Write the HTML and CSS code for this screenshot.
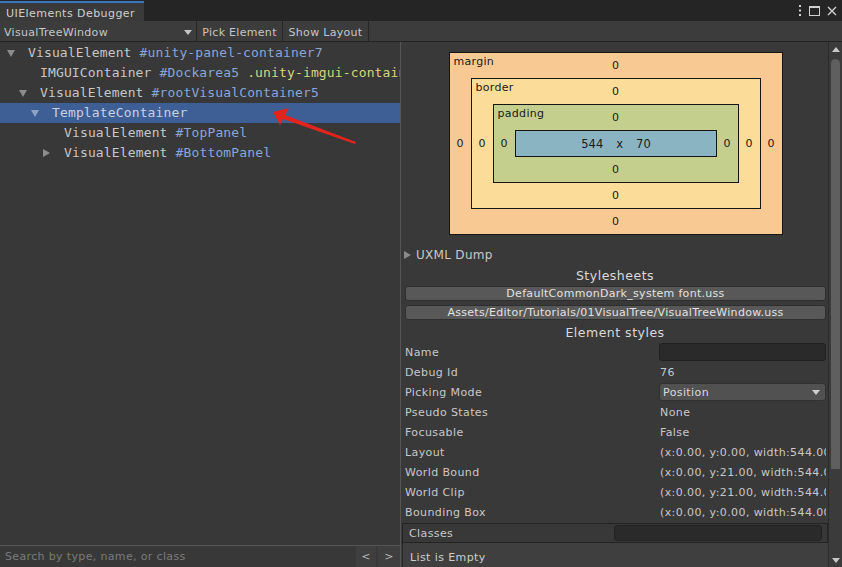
FILE: index.html
```html
<!DOCTYPE html>
<html>
<head>
<meta charset="utf-8">
<link rel="stylesheet" href="styles.css">
</head>
<body>
<div class="window">
  <div class="tabbar">
    <div class="tab">UIElements Debugger</div>
    <div class="tabicons">
      <svg class="ico" width="4" height="11" viewBox="0 0 4 11"><rect x="1" y="0" width="2" height="2" fill="#d0d0d0"/><rect x="1" y="4.5" width="2" height="2" fill="#d0d0d0"/><rect x="1" y="9" width="2" height="2" fill="#d0d0d0"/></svg>
      <svg class="ico" width="11" height="10" viewBox="0 0 11 10"><rect x="0.5" y="0.5" width="10" height="9" fill="none" stroke="#d0d0d0" stroke-width="1"/><rect x="0" y="0" width="11" height="2" fill="#d0d0d0"/></svg>
      <svg class="ico" width="10" height="10" viewBox="0 0 10 10"><path d="M1 1 L9 9 M9 1 L1 9" stroke="#d0d0d0" stroke-width="1.4"/></svg>
    </div>
  </div>
  <div class="toolbar">
    <div class="tb-dropdown"><span>VisualTreeWindow</span><svg width="8" height="5" viewBox="0 0 8 5"><path d="M0 0 H8 L4 5 Z" fill="#c4c4c4"/></svg></div>
    <div class="tb-btn">Pick Element</div>
    <div class="tb-btn">Show Layout</div>
  </div>
  <div class="main">
    <div class="left">
      <div class="tree">
        <div class="row d0"><span class="tog"><svg width="8" height="7" viewBox="0 0 8 7"><path d="M0 0 H8 L4 7 Z"/></svg></span><span>VisualElement</span>&nbsp;<span class="id">#unity-panel-container7</span></div>
        <div class="row d1"><span class="tog"></span><span>IMGUIContainer</span>&nbsp;<span class="id">#Dockarea5</span>&nbsp;<span class="cls">.unity-imgui-container</span></div>
        <div class="row d1"><span class="tog"><svg width="8" height="7" viewBox="0 0 8 7"><path d="M0 0 H8 L4 7 Z"/></svg></span><span>VisualElement</span>&nbsp;<span class="id">#rootVisualContainer5</span></div>
        <div class="row d2 sel"><span class="tog"><svg width="8" height="7" viewBox="0 0 8 7"><path d="M0 0 H8 L4 7 Z"/></svg></span><span>TemplateContainer</span></div>
        <div class="row d3"><span class="tog"></span><span>VisualElement</span>&nbsp;<span class="id">#TopPanel</span></div>
        <div class="row d3"><span class="tog"><svg width="7" height="8" viewBox="0 0 7 8"><path d="M0 0 L7 4 L0 8 Z"/></svg></span><span>VisualElement</span>&nbsp;<span class="id">#BottomPanel</span></div>
      </div>
      <div class="search">
        <span class="search-text">Search by type, name, or class</span>
        <div class="nav-btn">&lt;</div>
        <div class="nav-btn wide">&gt;</div>
      </div>
      <svg class="annot" width="400" height="120" viewBox="0 0 400 120"><polygon points="273,70 289,66 285,73 356,100 355,102 283,77 280,83" fill="#e3241c"/></svg>
    </div>
    <div class="right">
      <div class="inspector">
        <div class="bm-wrap">
          <div class="bm margin">
            <div class="bm-top"><span class="bm-label">margin</span><span>0</span><span></span></div>
            <div class="bm-side">0</div>
            <div class="bm border">
              <div class="bm-top"><span class="bm-label">border</span><span>0</span><span></span></div>
              <div class="bm-side">0</div>
              <div class="bm padding">
                <div class="bm-top"><span class="bm-label">padding</span><span>0</span><span></span></div>
                <div class="bm-side">0</div>
                <div class="bm-content"><span>544</span><span>x</span><span>70</span></div>
                <div class="bm-side">0</div>
                <div class="bm-bottom">0</div>
              </div>
              <div class="bm-side">0</div>
              <div class="bm-bottom">0</div>
            </div>
            <div class="bm-side">0</div>
            <div class="bm-bottom">0</div>
          </div>
        </div>
        <div class="foldout"><svg width="7" height="8" viewBox="0 0 7 8"><path d="M0 0 L7 4 L0 8 Z" fill="#8a8a8a"/></svg><span>UXML Dump</span></div>
        <div class="section-title">Stylesheets</div>
        <div class="pad">
          <div class="sheet-btn first">DefaultCommonDark_system font.uss</div>
          <div class="sheet-btn">Assets/Editor/Tutorials/01VisualTree/VisualTreeWindow.uss</div>
        </div>
        <div class="section-title second">Element styles</div>
        <div class="props">
          <div class="prop"><span class="lbl">Name</span><div class="field"></div></div>
          <div class="prop"><span class="lbl">Debug Id</span><span class="val">76</span></div>
          <div class="prop"><span class="lbl">Picking Mode</span><div class="dropdown"><span>Position</span><svg width="8" height="5" viewBox="0 0 8 5"><path d="M0 0 H8 L4 5 Z" fill="#cfcfcf"/></svg></div></div>
          <div class="prop"><span class="lbl">Pseudo States</span><span class="val">None</span></div>
          <div class="prop"><span class="lbl">Focusable</span><span class="val">False</span></div>
          <div class="prop"><span class="lbl">Layout</span><span class="val">(x:0.00, y:0.00, width:544.00, height:70.00)</span></div>
          <div class="prop"><span class="lbl">World Bound</span><span class="val">(x:0.00, y:21.00, width:544.00, height:70.00)</span></div>
          <div class="prop"><span class="lbl">World Clip</span><span class="val">(x:0.00, y:21.00, width:544.00, height:70.00)</span></div>
          <div class="prop"><span class="lbl">Bounding Box</span><span class="val">(x:0.00, y:0.00, width:544.00, height:70.00)</span></div>
        </div>
        <div class="classes">
          <div class="classes-head"><span>Classes</span><div class="classes-field"></div></div>
          <div class="classes-list">List is Empty</div>
        </div>
      </div>
      <div class="vscroll">
        <div class="sc-arrow"><svg width="8" height="5" viewBox="0 0 8 5"><path d="M0 5 H8 L4 0 Z" fill="#c8c8c8"/></svg></div>
        <div class="thumb"></div>
        <div class="sc-space"></div>
        <div class="sc-arrow bottom"><svg width="8" height="5" viewBox="0 0 8 5"><path d="M0 0 H8 L4 5 Z" fill="#c8c8c8"/></svg></div>
      </div>
    </div>
  </div>
</div>
</body>
</html>
```
FILE: styles.css
```css
html, body {
  margin: 0;
  padding: 0;
  background: #383838;
}
body {
  font-family: "DejaVu Sans", sans-serif;
  font-size: 11px;
  color: #c8c8c8;
}
.window {
  width: 842px;
  height: 567px;
  display: flex;
  flex-direction: column;
  overflow: hidden;
}
.tabbar {
  height: 21px;
  flex: none;
  background: #252525;
  display: flex;
  justify-content: space-between;
  align-items: flex-start;
}
.tab {
  margin-top: 1px;
  width: 144px;
  height: 20px;
  box-sizing: border-box;
  border-top: 2px solid #3a76bf;
  background: #3a3a3a;
  color: #cfcfcf;
  padding: 2px 0 0 6px;
  line-height: 17px;
  letter-spacing: 0.45px;
}
.tabicons {
  display: flex;
  align-items: center;
  gap: 7px;
  padding: 5px 5px 0 0;
}
.ico { display: block; }
.toolbar {
  height: 20px;
  flex: none;
  background: #3c3c3c;
  border-bottom: 1px solid #232323;
  display: flex;
  align-items: stretch;
  line-height: 23px;
  letter-spacing: 0.3px;
}
.tb-dropdown {
  width: 197px;
  box-sizing: border-box;
  padding: 3px 4px 0 4px;
  border-right: 1px solid #262626;
  display: flex;
  justify-content: space-between;
  align-items: center;
  color: #c6c6c6;
  line-height: 17px;
}
.tb-btn {
  width: 86px;
  box-sizing: border-box;
  text-align: center;
  border-right: 1px solid #262626;
  color: #c6c6c6;
}
.main {
  flex: 1;
  display: flex;
  min-height: 0;
}
.left {
  width: 400px;
  flex: none;
  display: flex;
  flex-direction: column;
  position: relative;
  border-right: 1px solid #555555;
  background: #383838;
}
.tree {
  flex: 1;
  overflow: hidden;
  font-family: "DejaVu Sans Mono", monospace;
  font-size: 13px;
  letter-spacing: 0.14px;
  color: #c6c6c6;
  padding-top: 1px;
}
.row {
  height: 20px;
  line-height: 20px;
  display: flex;
  align-items: center;
  white-space: nowrap;
  box-sizing: border-box;
}
.row.d0 { padding-left: 4px; }
.row.d1 { padding-left: 16px; }
.row.d2 { padding-left: 28px; }
.row.d3 { padding-left: 40px; }
.tog {
  width: 24px;
  flex: none;
  display: flex;
  align-items: center;
  padding-left: 3px;
  box-sizing: border-box;
}
.tog svg { fill: #8c8c8c; display: block; }
.row.sel {
  background: #3e5f96;
  color: #c8d0e2;
}
.row.sel .tog svg { fill: #8ea3c9; }
.id { color: #88a6d8; }
.cls { color: #d5d57d; }
.search {
  height: 21px;
  flex: none;
  border-top: 1px solid #555555;
  display: flex;
  align-items: stretch;
  letter-spacing: 0.35px;
}
.search-text {
  flex: 1;
  color: #7b7b7b;
  padding-left: 5px;
  line-height: 21px;
}
.nav-btn {
  width: 20px;
  background: #3f3f3f;
  color: #b4b4b4;
  text-align: center;
  line-height: 22px;
  margin-right: 2px;
}
.nav-btn.wide { width: 22px; margin-right: 0; }
.annot {
  position: absolute;
  left: 0;
  top: 0;
  pointer-events: none;
}
.right {
  flex: 1;
  display: flex;
  min-width: 0;
  background: #393939;
}
.inspector {
  flex: 1;
  min-width: 0;
  overflow: hidden;
  display: flex;
  flex-direction: column;
}
.inspector > * { flex: none; }
.bm-wrap {
  padding: 10px 0 0 2px;
  display: flex;
  justify-content: center;
}
.bm {
  display: grid;
  grid-template-columns: 21px auto 21px;
  grid-template-rows: 25px auto 25px;
  border: 1px solid #151515;
  color: #1a1a1a;
  font-size: 11px;
}
.margin { background: #f8c993; }
.border { background: #fcdc99; }
.padding { background: #c5cf8d; }
.bm-top {
  grid-column: 1 / 4;
  display: grid;
  grid-template-columns: 1fr auto 1fr;
  align-items: center;
}
.bm-label {
  justify-self: start;
  align-self: start;
  padding: 2px 0 0 4px;
  letter-spacing: 0.3px;
}
.bm-side {
  display: flex;
  align-items: center;
  justify-content: center;
}
.bm-bottom {
  grid-column: 1 / 4;
  display: flex;
  align-items: center;
  justify-content: center;
}
.bm-content {
  width: 199px;
  height: 25px;
  background: #8bb4c3;
  border: 1px solid #151515;
  display: flex;
  align-items: center;
  justify-content: center;
  gap: 13px;
  padding-left: 1px;
  font-size: 11.5px;
}
.foldout {
  margin-top: 10px;
  height: 20px;
  display: flex;
  align-items: center;
  padding-left: 3px;
  gap: 5px;
  font-size: 12px;
  color: #c8c8c8;
  letter-spacing: 0.3px;
}
.foldout svg { display: block; }
.section-title {
  height: 20px;
  line-height: 22px;
  text-align: center;
  font-size: 12.5px;
  color: #dadada;
  letter-spacing: 0.5px;
  padding-left: 1px;
}
.section-title.second { margin-top: 2px; }
.pad { padding: 0 2px 0 4px; }
.sheet-btn {
  height: 15px;
  box-sizing: border-box;
  margin-top: 4px;
  background: #585858;
  border: 1px solid #2f2f2f;
  border-radius: 3px;
  text-align: center;
  line-height: 13px;
  color: #e2e2e2;
  letter-spacing: 0.3px;
  white-space: nowrap;
  overflow: hidden;
}
.sheet-btn.first { margin-top: 1px; }
.props {
  padding: 0 2px 0 4px;
  letter-spacing: 0.4px;
}
.prop {
  height: 20px;
  display: grid;
  grid-template-columns: 254px 1fr;
  align-items: center;
  white-space: nowrap;
}
.lbl { color: #c8c8c8; }
.val { color: #c8c8c8; padding-left: 1px; overflow: hidden; }
.field {
  height: 18px;
  box-sizing: border-box;
  background: #2a2a2a;
  border: 1px solid #212121;
  border-radius: 3px;
}
.dropdown {
  height: 18px;
  box-sizing: border-box;
  background: #515151;
  border: 1px solid #303030;
  border-radius: 3px;
  display: flex;
  align-items: center;
  justify-content: space-between;
  padding: 0 5px 0 3px;
  color: #dcdcdc;
}
.dropdown svg { display: block; }
.classes {
  margin: 1px 0 0 1px;
  flex: 1 1 auto;
  display: flex;
  flex-direction: column;
  letter-spacing: 0.4px;
}
.classes-head {
  height: 20px;
  flex: none;
  box-sizing: border-box;
  border: 1px solid #242424;
  display: flex;
  align-items: center;
  justify-content: space-between;
  padding: 0 5px 0 6px;
  background: #383838;
}
.classes-field {
  width: 208px;
  height: 16px;
  box-sizing: border-box;
  background: #2a2a2a;
  border: 1px solid #222222;
  border-radius: 3px;
}
.classes-list {
  flex: 1;
  background: #3f3f3f;
  border-left: 1px solid #262626;
  padding-left: 7px;
  line-height: 29px;
  color: #cdcdcd;
}
.vscroll {
  width: 13px;
  flex: none;
  border-left: 1px solid #2b2b2b;
  background: #3b3b3b;
  display: flex;
  flex-direction: column;
  align-items: center;
}
.sc-arrow {
  height: 15px;
  display: flex;
  align-items: center;
  justify-content: center;
  flex: none;
}
.sc-arrow svg { display: block; }
.sc-arrow.bottom { height: 14px; }
.thumb {
  margin-top: 2px;
  width: 9px;
  height: 410px;
  background: #5f5f5f;
  border-radius: 5px 5px 1px 1px;
  flex: none;
}
.sc-space { flex: 1; }
```
